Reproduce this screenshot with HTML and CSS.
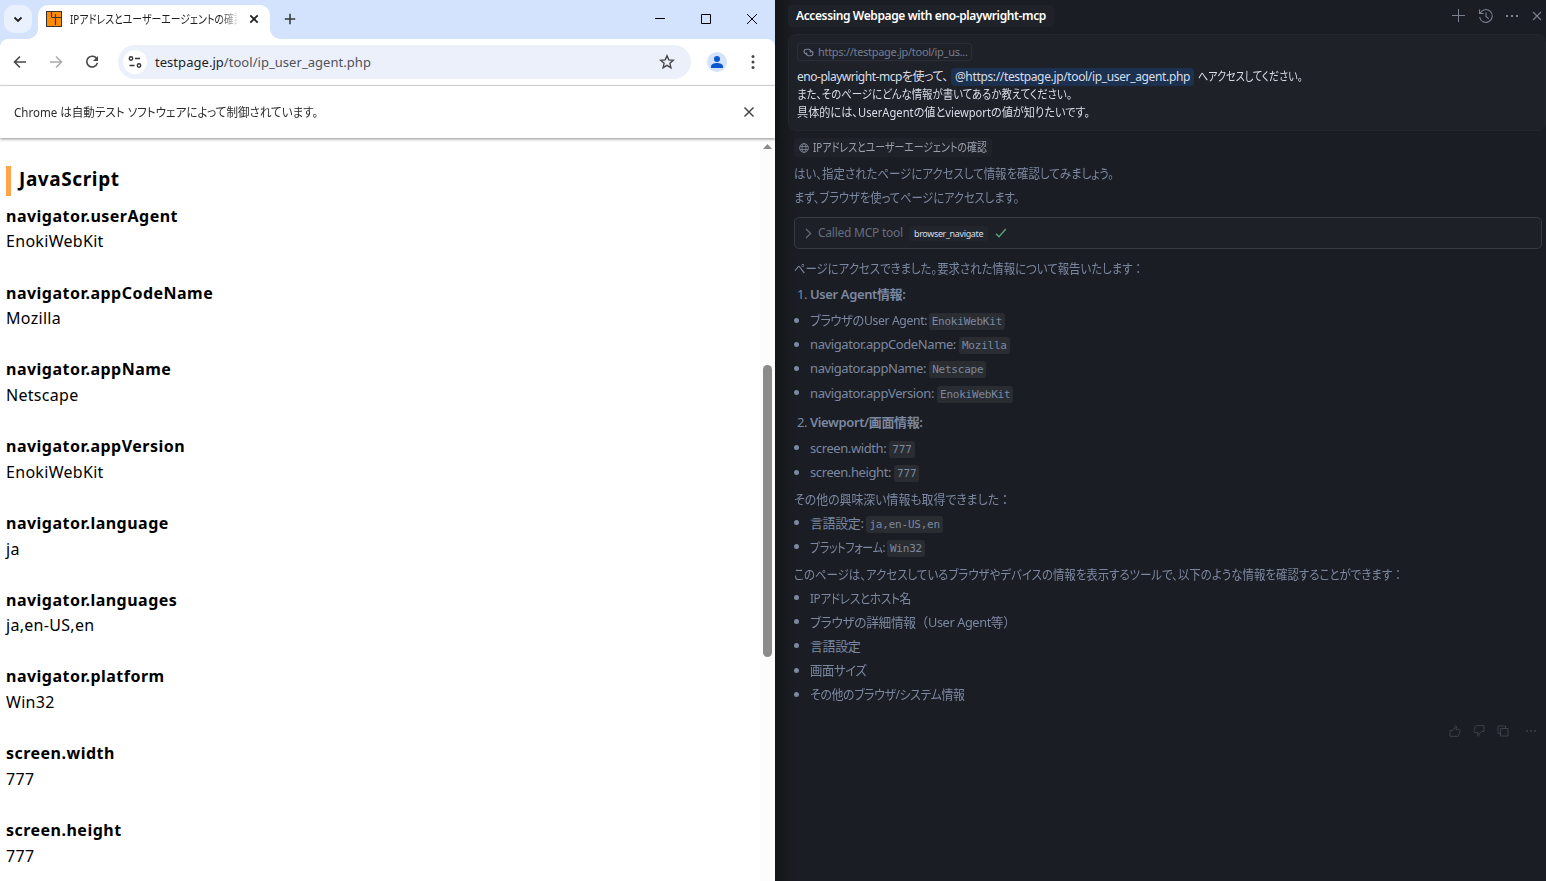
FILE: index.html
```html
<!DOCTYPE html>
<html lang="ja">
<head>
  <meta charset="UTF-8" />
  <title>IPアドレスとユーザーエージェントの確認</title>
  <link rel="stylesheet" href="styles.css">
</head>
<body>
  <div class="browser">
    <div class="tabstrip">
      <div class="tab-search">
        <svg width="28" height="28" viewBox="0 0 28 28"><path d="M10.5 12.5l3.5 3.5 3.5-3.5" stroke="#1f1f1f" stroke-width="1.8"/></svg>
      </div>
      <div class="tab">
        <svg width="16" height="16" viewBox="0 0 16 16"><path d="M0 0h16v16H0z" fill="#333"/><path d="M1 1h14v14H1z" fill="#ff8c00"/><path d="M6 6.500h9M9.500 3v11M5.500 6.500V1" stroke="#333" stroke-width="1.200"/></svg>
        <div class="tab-title"><span class="narrow source-text">IPアドレスとユーザーエージェントの確認</span></div>
        <svg width="10" height="10" viewBox="0 0 10 10"><path d="M1.3 1.3l7.4 7.4M8.7 1.3l-7.4 7.4" stroke="#1f1f1f" stroke-width="1.7"/></svg>
      </div>
      <svg class="new-tab" width="12" height="12" viewBox="0 0 12 12"><path d="M6 .8v10.4M.8 6h10.4" stroke="#333" stroke-width="1.5"/></svg>
      <div class="win-controls">
        <svg width="46" height="38" viewBox="0 0 46 38"><path d="M18 18.5h10" stroke="#000"/></svg>
        <svg width="46" height="38" viewBox="0 0 46 38"><path d="M18.5 14.5h9v9h-9z" stroke="#000"/></svg>
        <svg width="46" height="38" viewBox="0 0 46 38"><path d="M18 14l10 10M28 14l-10 10" stroke="#000"/></svg>
      </div>
    </div>

    <div class="toolbar">
      <svg width="36" height="36" viewBox="0 0 36 36"><path d="M24 18H13M18 12.500L12.500 18l5.500 5.500" stroke="#474747" stroke-width="1.6"/></svg>
      <svg width="36" height="36" viewBox="0 0 36 36"><path d="M12 18h11M18 12.500l5.500 5.500-5.500 5.500" stroke="#ababab" stroke-width="1.6"/></svg>
      <svg width="36" height="36" viewBox="0 0 36 36"><path d="M23 15.200a5.400 5.400 0 1 0 .4 3.700" stroke="#474747" stroke-width="1.6"/><path d="M24 12v5h-5z" fill="#474747"/></svg>
      <div class="omnibox">
        <div class="site-info">
          <svg width="14" height="14" viewBox="0 0 14 14"><circle cx="3" cy="3.500" r="1.700" stroke="#333" stroke-width="1.400"/><path d="M7 3.500h5M1.500 10.500h5" stroke="#333" stroke-width="1.500"/><circle cx="11" cy="10.500" r="1.700" stroke="#333" stroke-width="1.400"/></svg>
        </div>
        <span class="url"><b>testpage.jp</b>/tool/ip_user_agent.php</span>
        <svg class="star" width="16" height="16" viewBox="0 0 16 16"><path d="M8 1.800l1.800 4.100 4.500.4-3.400 3 1 4.400L8 11.400l-3.900 2.300 1-4.400-3.400-3 4.500-.4z" stroke="#474747" stroke-width="1.400"/></svg>
      </div>
      <svg class="avatar" width="20" height="20" viewBox="0 0 20 20"><circle cx="10" cy="10" r="10" fill="#d3e3fd"/><circle cx="10" cy="7" r="3" fill="#0b57d0"/><path d="M4 16v-1.500c0-2.300 3.500-3.400 6-3.400s6 1.100 6 3.400V16z" fill="#0b57d0"/></svg>
      <svg class="kebab" width="4" height="16" viewBox="0 0 4 16"><circle cx="2" cy="2.500" r="1.500"/><circle cx="2" cy="8" r="1.500"/><circle cx="2" cy="13.500" r="1.500"/></svg>
    </div>

    <div class="infobar">
      <span class="narrow infobar-text">Chrome は自動テスト ソフトウェアによって制御されています。</span>
      <svg width="12" height="12" viewBox="0 0 12 12"><path d="M1.500 1.500l9 9M10.500 1.500l-9 9" stroke="#474747" stroke-width="1.500"/></svg>
    </div>

    <div class="viewport">
      <div class="page">
        <h2>JavaScript</h2>
        <dl>
          <dt>navigator.userAgent</dt><dd>EnokiWebKit</dd>
          <dt>navigator.appCodeName</dt><dd>Mozilla</dd>
          <dt>navigator.appName</dt><dd>Netscape</dd>
          <dt>navigator.appVersion</dt><dd>EnokiWebKit</dd>
          <dt>navigator.language</dt><dd>ja</dd>
          <dt>navigator.languages</dt><dd>ja,en-US,en</dd>
          <dt>navigator.platform</dt><dd>Win32</dd>
          <dt>screen.width</dt><dd>777</dd>
          <dt>screen.height</dt><dd>777</dd>
        </dl>
      </div>
      <div class="scrollbar">
        <svg width="9" height="5" viewBox="0 0 9 5"><path d="M4.500 0L9 5H0z" fill="#8b8b8b"/></svg>
        <div class="thumb"></div>
      </div>
    </div>
  </div>

  <div class="chat">
    <div class="chat-header">
      <span class="chat-title">Accessing Webpage with eno-playwright-mcp</span>
      <div class="chat-actions">
        <svg width="14" height="14" viewBox="0 0 14 14"><path d="M6.500 0v13M0 6.500h13" stroke="#79818f"/></svg>
        <svg width="16" height="16" viewBox="0 0 16 16"><path d="M2 5.500A6.400 6.400 0 1 1 1.600 9M1.500 1.500v4h4M8 4.500V8.500l2.800 2.300" stroke="#79818f" stroke-width="1.100"/></svg>
        <svg class="more" width="14" height="4" viewBox="0 0 14 4"><path d="M0 1h2v2H0zM5 1h2v2H5zM10 1h2v2h-2z"/></svg>
        <svg width="10" height="10" viewBox="0 0 10 10"><path d="M1 1l8 8M9 1L1 9" stroke="#79818f" stroke-width="1.100"/></svg>
      </div>
    </div>

    <div class="message">
      <div class="context">
        <svg width="11" height="11" viewBox="0 0 16 16"><path d="M6.500 10H4.800a3.300 3.300 0 0 1 0-6.600h3.400a3.300 3.300 0 0 1 2.900 4.800M9.500 6h1.700a3.300 3.300 0 0 1 0 6.600H7.800a3.300 3.300 0 0 1-2.900-4.800" stroke="#7d8697" stroke-width="1.500"/></svg>
        <span>https://testpage.jp/tool/ip_us...</span>
      </div>
      <p><span class="ask-1">eno-playwright-mcpを使って、</span><span class="mention">@https://testpage.jp/tool/ip_user_agent.php</span><span class="narrow ask-2">へアクセスしてください。</span></p>
      <p><span class="narrow ask-3">また、そのページにどんな情報が書いてあるか教えてください。</span></p>
      <p><span class="narrow ask-4">具体的には、UserAgentの値とviewportの値が知りたいです。</span></p>
    </div>

    <div class="answer">
      <div class="source">
        <svg width="10" height="10" viewBox="0 0 10 10"><circle cx="5" cy="5" r="4.400" stroke="#79818f" stroke-width=".9"/><ellipse cx="5" cy="5" rx="2" ry="4.400" stroke="#79818f" stroke-width=".9"/><path d="M.8 3.500h8.400M.8 6.500h8.400" stroke="#79818f" stroke-width=".9"/></svg>
        <span class="narrow source-text">IPアドレスとユーザーエージェントの確認</span>
      </div>
      <p><span class="narrow line-a">はい、指定されたページにアクセスして情報を確認してみましょう。</span></p>
      <p><span class="narrow line-b">まず、ブラウザを使ってページにアクセスします。</span></p>

      <div class="tool-call">
        <svg width="7" height="11" viewBox="0 0 7 11"><path d="M1 1l4.700 4.500L1 10" stroke="#69717f" stroke-width="1.100"/></svg>
        <span class="tool-label">Called MCP tool</span>
        <span class="tool-name">browser_navigate</span>
        <svg width="12" height="10" viewBox="0 0 12 10"><path d="M1 5.800l3 3L10.800 1" stroke="#58a878" stroke-width="1.300"/></svg>
      </div>

      <p><span class="narrow line-c">ページにアクセスできました。要求された情報について報告いたします<span class="full">：</span></span></p>
      <p class="step"><i>1.</i><b>User Agent情報:</b></p>
      <ul>
        <li><span class="narrow label-ua">ブラウザのUser Agent:</span> <code>EnokiWebKit</code></li>
        <li>navigator.appCodeName: <code>Mozilla</code></li>
        <li>navigator.appName: <code>Netscape</code></li>
        <li>navigator.appVersion: <code>EnokiWebKit</code></li>
      </ul>
      <p class="step step-2"><i>2.</i><b>Viewport/画面情報:</b></p>
      <ul>
        <li>screen.width: <code>777</code></li>
        <li>screen.height: <code>777</code></li>
      </ul>
      <p><span class="narrow line-d">その他の興味深い情報も取得できました<span class="full">：</span></span></p>
      <ul>
        <li>言語設定: <code>ja,en-US,en</code></li>
        <li><span class="narrow label-pf">プラットフォーム:</span> <code>Win32</code></li>
      </ul>
      <p><span class="narrow line-e">このページは、アクセスしているブラウザやデバイスの情報を表示するツールで、以下のような情報を確認することができます<span class="full">：</span></span></p>
      <ul>
        <li><span class="narrow item-1">IPアドレスとホスト名</span></li>
        <li><span class="narrow item-2">ブラウザの詳細情報<span class="full">（</span>User Agent等<span class="full">）</span></span></li>
        <li>言語設定</li>
        <li><span class="narrow item-4">画面サイズ</span></li>
        <li><span class="narrow item-5">その他のブラウザ/システム情報</span></li>
      </ul>
    </div>

    <div class="feedback">
      <svg width="12" height="12" viewBox="0 0 12 12"><path d="M1 5.500h2.300L6 3V1.300c0-.9 1.600-.7 1.600.6L7 4.600h3c1 0 1.300.8 1 1.700l-1.200 4c-.2.700-.6 1-1.300 1H1z"/></svg>
      <svg width="12" height="12" viewBox="0 0 12 12"><path d="M11 6.500H8.700L6 9v1.700c0 .9-1.600.7-1.600-.6L5 7.400H2c-1 0-1.300-.8-1-1.700l1.200-4c.2-.7.600-1 1.300-1H11z"/></svg>
      <svg width="12" height="12" viewBox="0 0 12 12"><path d="M3.500 3.500h7.500v7.500H3.500zM3.500 8.500H1V1h7.500v2.500"/></svg>
      <svg width="12" height="12" viewBox="0 0 12 12"><path d="M1 6h2M5 6h2M9 6h2" stroke-width="1.600"/></svg>
    </div>
  </div>
</body>
</html>
```
FILE: styles.css
```css
* {
  box-sizing: border-box;
}

body {
  margin: 0;
  display: flex;
  width: 1546px;
  height: 881px;
  overflow: hidden;
  font-family: "Noto Sans", "Noto Sans CJK JP", sans-serif;
  font-feature-settings: "palt";
  background: #1a1d23;
}

svg {
  flex: none;
  display: block;
  fill: none;
}

p, h2, dl, dd, ul {
  margin: 0;
  padding: 0;
}

span, b, code {
  white-space: nowrap;
}

/* condensed kana, as in a UI font */
.narrow {
  display: inline-block;
  transform-origin: 0 50%;
}

.full {
  font-feature-settings: normal;
}

.source-text { transform: scaleX(0.825); }
.infobar-text { transform: scaleX(0.962); }
.ask-2 { transform: scaleX(0.84); }
.ask-3 { transform: scaleX(0.868); }
.ask-4 { transform: scaleX(0.93); }
.line-a { transform: scaleX(0.88); }
.line-b { transform: scaleX(0.862); }
.line-c { transform: scaleX(0.876); }
.line-d { transform: scaleX(0.915); }
.line-e { transform: scaleX(0.88); }
.item-1 { transform: scaleX(0.9); }
.item-2 { transform: scaleX(0.98); }
.item-4 { transform: scaleX(0.95); }
.item-5 { transform: scaleX(0.915); }

.label-ua {
  margin-right: -6px;
  transform: scaleX(0.94);
}

.label-pf {
  margin-right: -12px;
  transform: scaleX(0.845);
}

/* browser window */
.browser {
  width: 775px;
  flex: none;
  display: flex;
  flex-direction: column;
  background: #d3e3fd;
}

.tabstrip {
  height: 39px;
  flex: none;
  display: flex;
  padding-left: 4px;
}

.tab-search {
  width: 28px;
  height: 28px;
  margin: 5px 6px 0 0;
  border-radius: 10px;
  background: #e9f1fe;
}

.tab {
  position: relative;
  width: 232px;
  height: 34px;
  margin-top: 5px;
  padding: 0 11px 6px 8px;
  display: flex;
  align-items: center;
  border-radius: 10px 10px 0 0;
  background: #fff;
}

.tab::before,
.tab::after {
  content: "";
  position: absolute;
  bottom: 0;
  width: 10px;
  height: 10px;
}

.tab::before {
  left: -10px;
  background: radial-gradient(circle at 0 0, transparent 9.5px, #fff 10px);
}

.tab::after {
  right: -10px;
  background: radial-gradient(circle at 100% 0, transparent 9.5px, #fff 10px);
}

.tab-title {
  width: 167px;
  margin: 0 12px 0 8px;
  overflow: hidden;
  font-size: 12px;
  color: #1f1f1f;
  -webkit-mask-image: linear-gradient(90deg, #000 150px, transparent 170px);
}

.new-tab {
  margin: 13px 0 0 14px;
}

.win-controls {
  margin-left: auto;
  display: flex;
}

.toolbar {
  height: 47px;
  flex: none;
  padding: 0 20px 0 2px;
  display: flex;
  align-items: center;
  background: #fff;
  border-bottom: 1px solid #dcdfe3;
  border-radius: 8px 8px 0 0;
}

.omnibox {
  width: 573px;
  height: 34px;
  margin-left: 8px;
  padding: 0 16px 0 5px;
  display: flex;
  align-items: center;
  border-radius: 17px;
  background: #ebf0fa;
}

.site-info {
  width: 24px;
  height: 24px;
  display: flex;
  align-items: center;
  justify-content: center;
  border-radius: 50%;
  background: #fff;
}

.url {
  margin-left: 8px;
  font-size: 13px;
  letter-spacing: 0.04px;
  color: #50535a;
}

.url b {
  font-weight: 400;
  color: #1f1f1f;
}

.star {
  margin-left: auto;
}

.avatar {
  margin-left: 16px;
}

.kebab {
  margin-left: auto;
  fill: #474747;
}

.infobar {
  position: relative;
  height: 52px;
  flex: none;
  padding: 0 20px 0 14px;
  display: flex;
  align-items: center;
  justify-content: space-between;
  font-size: 12px;
  color: #2b2b2b;
  background: #fff;
  box-shadow: 0 1px 3px rgba(0, 0, 0, 0.45);
}

.viewport {
  flex: 1;
  min-height: 0;
  display: flex;
  background: #fff;
}

.page {
  flex: 1;
  padding: 28px 0 0 6px;
  color: #000;
}

.page h2 {
  height: 30px;
  padding-left: 8px;
  border-left: 5px solid #ffa64d;
  font-size: 19px;
  letter-spacing: 0.6px;
  line-height: 27px;
}

.page dl {
  margin-top: 7.8px;
  font-size: 16px;
  line-height: 25.6px;
}

.page dt {
  font-weight: 700;
  letter-spacing: 0.48px;
}

.page dd {
  margin-bottom: 25.6px;
  letter-spacing: 0.3px;
}

.scrollbar {
  width: 15px;
  padding-top: 6px;
  display: flex;
  flex-direction: column;
  align-items: center;
  background: #fcfcfc;
}

.thumb {
  width: 9px;
  height: 292px;
  flex: none;
  margin-top: 216px;
  border-radius: 5px;
  background: #8b8b8b;
}

/* chat panel */
.chat {
  flex: 1;
  padding-left: 13px;
  font-size: 13px;
  color: #7b88a1;
  background: linear-gradient(90deg, #131518, #1a1d23 20px);
}

.chat-header {
  height: 34px;
  padding-right: 4px;
  display: flex;
  align-items: center;
  justify-content: space-between;
}

.chat-title {
  height: 22px;
  margin-bottom: 2px;
  padding: 0 8px;
  border-radius: 4px;
  font-size: 12px;
  font-weight: 600;
  letter-spacing: -0.38px;
  line-height: 22px;
  color: #fff;
  background: #1f2228;
}

.chat-actions {
  display: flex;
  align-items: center;
  gap: 12px;
  margin-bottom: 2px;
}

.more {
  fill: #79818f;
}

.message {
  height: 97px;
  padding: 8px 8px 0;
  border: 1px solid #23262d;
  border-radius: 8px;
  font-size: 12px;
  line-height: 18px;
  color: #d8dee9;
  background: #1f2128;
}

.context {
  width: 175px;
  height: 18px;
  margin-bottom: 7px;
  padding: 0 5px;
  display: flex;
  align-items: center;
  gap: 4px;
  border: 1px solid #2a2e36;
  border-radius: 3px;
  font-size: 11px;
  letter-spacing: -0.3px;
  color: #747e92;
}

.message p {
  height: 18px;
  display: flex;
}

.ask-1 {
  letter-spacing: -0.48px;
}

.mention {
  margin: 0 4px 0 3px;
  padding: 0 4px;
  border-radius: 4px;
  letter-spacing: -0.35px;
  background: #1c3150;
}

.answer {
  padding: 7px 4px 0 6px;
  line-height: 24px;
}

.source {
  width: 198px;
  height: 19px;
  margin-bottom: 4px;
  padding-left: 5px;
  display: flex;
  align-items: center;
  gap: 4px;
  border-radius: 3px;
  font-size: 12px;
  color: #99a0ad;
  background: #1f2228;
}

.answer p {
  height: 24px;
}

.tool-call {
  height: 32px;
  margin: 8px 0 7px;
  padding-left: 10px;
  display: flex;
  align-items: center;
  border: 1px solid #363a41;
  border-radius: 5px;
  font-size: 12px;
  color: #656e80;
  background: #1d2026;
}

.tool-label {
  margin: 0 6px;
  letter-spacing: -0.24px;
}

.tool-name {
  height: 15px;
  margin-right: 7px;
  padding: 0 5px;
  border-radius: 2px;
  font-size: 9px;
  letter-spacing: -0.36px;
  line-height: 15px;
  color: #d8dee9;
  background: #22252c;
}

.answer .step {
  display: flex;
  margin: 2px 0;
}

.answer .step-2 {
  margin-top: 5px;
}

.step i {
  width: 16px;
  padding-left: 3px;
  font-style: normal;
  letter-spacing: -0.5px;
}

.step b {
  font-weight: 600;
  letter-spacing: -0.38px;
}

.answer ul {
  list-style: none;
  margin-bottom: 2.5px;
}

.answer li {
  height: 24.2px;
  display: flex;
  align-items: center;
  letter-spacing: -0.4px;
  white-space: pre;
}

.answer li::before {
  content: "";
  width: 5px;
  height: 5px;
  margin-right: 11px;
  border-radius: 50%;
  background: #7b88a1;
}

.answer code {
  height: 17px;
  margin-top: 3px;
  padding: 0 3px;
  border-radius: 3px;
  font-family: "DejaVu Sans Mono", monospace;
  font-size: 11px;
  letter-spacing: -0.22px;
  line-height: 18px;
  background: #292c31;
}

.feedback {
  display: flex;
  justify-content: flex-end;
  gap: 12px;
  padding: 16px 9px 0 0;
}

.feedback svg {
  stroke: #3d4149;
}

.feedback svg:last-child {
  margin-left: 4px;
}
```
